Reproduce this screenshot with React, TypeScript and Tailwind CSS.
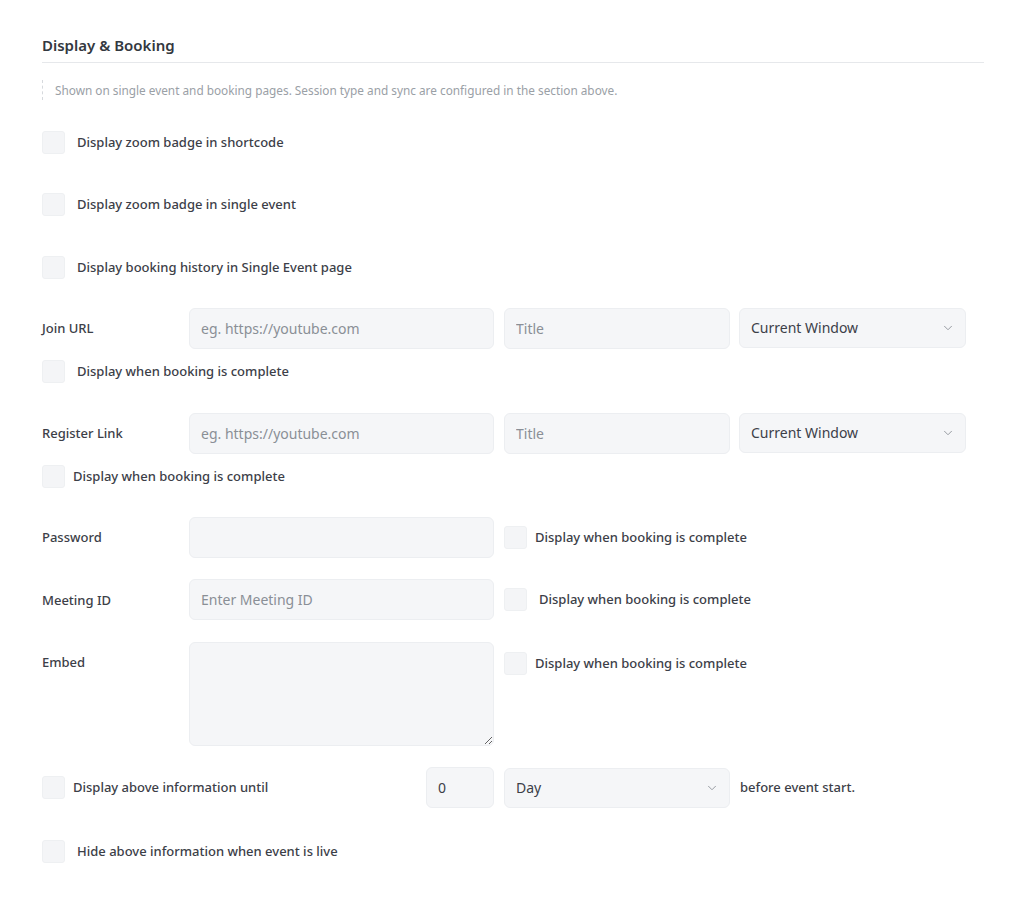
import { ChevronDown } from 'lucide-react';

const font = { fontFamily: '"Noto Sans", "Open Sans", Arial, sans-serif' };

function Box({ className = '' }: { className?: string }) {
  return (
    <span className={`block w-[23px] h-[23px] shrink-0 rounded-[3px] bg-[#f4f5f7] border border-[#eef0f2] ${className}`} />
  );
}

function Check({ label, gap = 'ml-[12px]', className = '' }: { label: string; gap?: string; className?: string }) {
  return (
    <label className={`flex items-center ${className}`}>
      <Box />
      <span className={`${gap} text-[13px] font-medium text-[#3c4048] leading-[23px]`}>{label}</span>
    </label>
  );
}

function Field({ placeholder, value, className = '' }: { placeholder?: string; value?: string; className?: string }) {
  return (
    <input
      placeholder={placeholder}
      defaultValue={value}
      className={`h-[41px] rounded-[6px] bg-[#f5f6f8] border border-[#eceef1] px-[11px] text-[14px] text-[#3c4048] placeholder:text-[#8a8f96] outline-none ${className}`}
      style={font}
    />
  );
}

function Select({ value, className = '' }: { value: string; className?: string }) {
  return (
    <div
      className={`h-[40px] rounded-[6px] bg-[#f5f6f8] border border-[#eceef1] pl-[11px] pr-[10px] flex items-center justify-between text-[14px] text-[#3c4048] ${className}`}
    >
      <span>{value}</span>
      <ChevronDown size={14} strokeWidth={1.5} className="text-[#8a8f96]" />
    </div>
  );
}

const labelCls = 'w-[147px] shrink-0 text-[13px] font-medium text-[#3c4048]';

export default function App() {
  return (
    <div className="min-h-screen bg-white" style={font}>
      <div className="pl-[42px] pr-[40px] pt-[34px]">
        <div className="border-b border-[#e6e8eb] pb-[6px]">
          <h2 className="h-[22px] leading-[22px] text-[15px] font-semibold text-[#333840]">Display &amp; Booking</h2>
        </div>

        <div className="mt-[17px] h-[20px] border-l border-dashed border-[#d6d9dd] pl-[12px] text-[11.8px] leading-[20px] text-[#9aa0a6]">
          Shown on single event and booking pages. Session type and sync are configured in the section above.
        </div>

        <Check className="mt-[31px]" label="Display zoom badge in shortcode" />
        <Check className="mt-[39px]" label="Display zoom badge in single event" />
        <Check className="mt-[40px]" label="Display booking history in Single Event page" />

        {/* Join URL */}
        <div className="mt-[29px] flex items-center">
          <span className={labelCls}>Join URL</span>
          <Field className="w-[305px]" placeholder="eg. https://youtube.com" />
          <Field className="w-[226px] ml-[10px]" placeholder="Title" />
          <Select className="w-[227px] ml-[9px] -mt-[2px]" value="Current Window" />
        </div>
        <Check className="mt-[11px]" label="Display when booking is complete" />

        {/* Register Link */}
        <div className="mt-[30px] flex items-center">
          <span className={labelCls}>Register Link</span>
          <Field className="w-[305px]" placeholder="eg. https://youtube.com" />
          <Field className="w-[226px] ml-[10px]" placeholder="Title" />
          <Select className="w-[227px] ml-[9px] -mt-[2px]" value="Current Window" />
        </div>
        <Check className="mt-[11px]" gap="ml-[8px]" label="Display when booking is complete" />

        {/* Password */}
        <div className="mt-[29px] flex items-center">
          <span className={labelCls}>Password</span>
          <Field className="w-[305px] h-[40px]" />
          <Check className="ml-[10px]" gap="ml-[8px]" label="Display when booking is complete" />
        </div>

        {/* Meeting ID */}
        <div className="mt-[21px] flex items-center">
          <span className={`${labelCls} pt-[3px]`}>Meeting ID</span>
          <Field className="w-[305px]" placeholder="Enter Meeting ID" />
          <Check className="ml-[10px]" label="Display when booking is complete" />
        </div>

        {/* Embed */}
        <div className="mt-[22px] flex items-start">
          <span className={`${labelCls} leading-[40px]`}>Embed</span>
          <textarea
            className="w-[305px] h-[104px] rounded-[6px] bg-[#f5f6f8] border border-[#eceef1] px-[11px] py-[8px] text-[14px] outline-none"
            style={font}
          />
          <Check className="ml-[10px] mt-[10px]" gap="ml-[8px]" label="Display when booking is complete" />
        </div>

        {/* Display until */}
        <div className="mt-[21px] flex items-center">
          <div className="w-[384px] shrink-0">
            <Check gap="ml-[8px]" label="Display above information until" />
          </div>
          <Field className="w-[68px]" value="0" />
          <Select className="w-[226px] ml-[10px]" value="Day" />
          <span className="ml-[10px] text-[13px] font-medium text-[#3c4048]">before event start.</span>
        </div>

        <Check className="mt-[32px]" label="Hide above information when event is live" />
      </div>
    </div>
  );
}
